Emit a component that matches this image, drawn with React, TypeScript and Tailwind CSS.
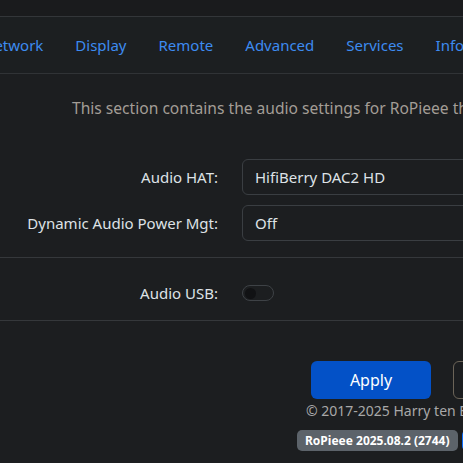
import React from "react";

const tabs = ["Network", "Display", "Remote", "Advanced", "Services", "Info"];

const font = { fontFamily: '"Noto Sans", "Open Sans", sans-serif' };

const App = () => {
  return (
    <main
      className="w-[463px] h-[463px] overflow-hidden bg-[#1c1e20] text-[#dee2e6]"
      style={font}
    >
      <div className="h-[17px] bg-[#1a1b1d] border-b border-[#333639]" />

      <nav className="h-[57px] bg-[#1c1f21] border-b border-[#303336] flex items-center -ml-[33px] whitespace-nowrap">
        {tabs.map((t) => (
          <a key={t} className="px-[16px] text-[15px] text-[#3d8bf0] shrink-0">
            {t}
          </a>
        ))}
      </nav>

      <p className="pt-[23px] pl-[72px] text-[15.6px] text-[#a39d96] whitespace-nowrap">
        This section contains the audio settings for RoPieee that control the audio output.
      </p>

      <section className="pt-[39px] flex flex-col gap-[10px] pb-[16px] border-b border-[#35383b]">
        <div className="flex items-center gap-[24px]">
          <label className="w-[218px] shrink-0 text-right text-[15px]">Audio HAT:</label>
          <div className="h-[36px] w-[400px] shrink-0 rounded-[6px] border border-[#3a3e42] flex items-center px-[12px] text-[15px]">
            HifiBerry DAC2 HD
          </div>
        </div>
        <div className="flex items-center gap-[24px]">
          <label className="w-[218px] shrink-0 text-right text-[15px]">Dynamic Audio Power Mgt:</label>
          <div className="h-[36px] w-[400px] shrink-0 rounded-[6px] border border-[#3a3e42] flex items-center px-[12px] text-[15px]">
            Off
          </div>
        </div>
      </section>

      <section className="h-[63px] pt-[8px] flex items-center gap-[24px] border-b border-[#35383b]">
        <label className="w-[218px] shrink-0 text-right text-[15px]">Audio USB:</label>
        <span className="w-[32px] h-[16px] rounded-full border border-[#3e4246] bg-[#1c1e20] flex items-center px-[2px]">
          <span className="w-[11px] h-[11px] rounded-full bg-[#111214]" />
        </span>
      </section>

      <div className="pt-[40px] flex gap-[22px] pl-[311px] whitespace-nowrap">
        <button className="w-[120px] h-[38px] shrink-0 rounded-[6px] bg-[#0351c7] text-white text-[16px]">
          Apply
        </button>
        <button className="w-[120px] h-[38px] shrink-0 rounded-[6px] border border-[#6b6458] text-[#dee2e6] text-[16px]">
          Reset
        </button>
      </div>

      <p className="pt-[1px] pl-[306px] text-[14px] text-[#a8a8a8] whitespace-nowrap">
        © 2017-2025 Harry ten Berge
      </p>

      <div className="pt-[9px] pl-[297px] flex gap-[4px] whitespace-nowrap">
        <span className="h-[21px] px-[8px] shrink-0 rounded-[5px] bg-[#5c636a] text-white text-[12px] font-bold flex items-center">
          RoPieee 2025.08.2 (2744)
        </span>
        <span className="h-[21px] px-[8px] shrink-0 rounded-[5px] bg-[#0d6efd] text-white text-[12px] font-bold flex items-center">
          Latest
        </span>
      </div>
    </main>
  );
};

export default App;
